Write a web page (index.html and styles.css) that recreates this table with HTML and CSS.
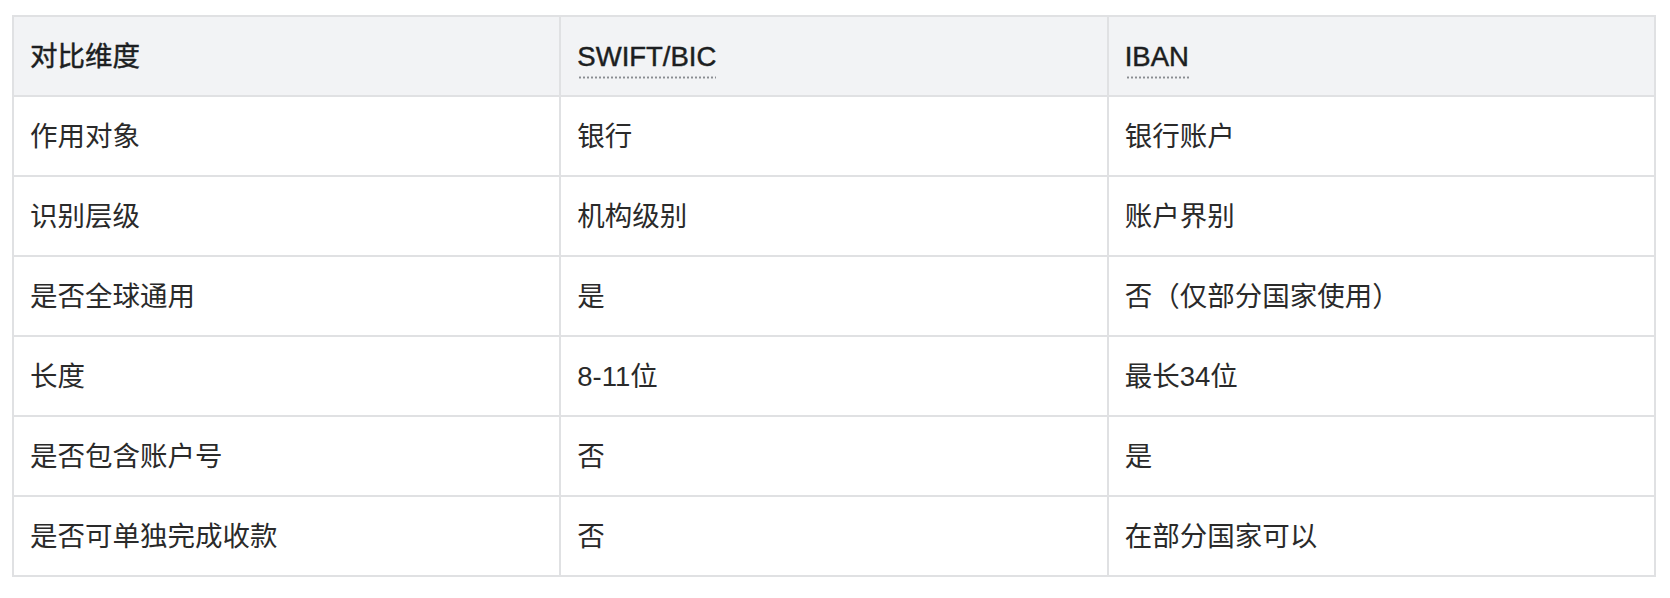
FILE: index.html
```html
<!DOCTYPE html>
<html lang="zh-CN">
<head>
<meta charset="utf-8">
<title>SWIFT/BIC 与 IBAN 对比</title>
<link rel="stylesheet" href="styles.css">
</head>
<body>
<div class="wrap">
  <table class="compare">
    <colgroup>
      <col class="c1"><col class="c2"><col class="c3">
    </colgroup>
    <thead>
      <tr>
        <th>对比维度</th>
        <th><abbr title="Society for Worldwide Interbank Financial Telecommunication / Bank Identifier Code">SWIFT/BIC</abbr></th>
        <th><abbr title="International Bank Account Number">IBAN</abbr></th>
      </tr>
    </thead>
    <tbody>
      <tr><td>作用对象</td><td>银行</td><td>银行账户</td></tr>
      <tr><td>识别层级</td><td>机构级别</td><td>账户界别</td></tr>
      <tr><td>是否全球通用</td><td>是</td><td>否（仅部分国家使用）</td></tr>
      <tr><td>长度</td><td>8-11位</td><td>最长34位</td></tr>
      <tr><td>是否包含账户号</td><td>否</td><td>是</td></tr>
      <tr><td>是否可单独完成收款</td><td>否</td><td>在部分国家可以</td></tr>
    </tbody>
  </table>
</div>
</body>
</html>
```

FILE: styles.css
```css
html, body {
  margin: 0;
  padding: 0;
  background: #ffffff;
}

body {
  font-family: "Liberation Sans", "Noto Sans CJK SC", sans-serif;
  color: #262626;
}

.wrap {
  padding: 15px 14px 0 12px;
}

.compare {
  width: 100%;
  border-collapse: collapse;
  table-layout: fixed;
  font-size: 27.5px;
}

.compare col {
  width: 33.333%;
}

.compare th,
.compare td {
  border: 2px solid #e0e1e3;
  padding: 2px 16px 0 16px;
  text-align: left;
  vertical-align: middle;
  line-height: 1.4;
  height: 80px;
  box-sizing: border-box;
}

.compare thead th {
  background: #f2f3f5;
  font-weight: 400;
  -webkit-text-stroke: 0.45px #1c1e21;
  color: #1c1e21;
  height: 80px;
}

.compare tbody td {
  font-weight: 400;
  color: #2a2a2a;
}

.compare abbr {
  text-decoration: none;
  padding-bottom: 7px;
  background-image: radial-gradient(circle, #8a8d91 0.9px, transparent 1.3px);
  background-repeat: repeat-x;
  background-position: 1px bottom;
  background-size: 4px 3px;
  cursor: help;
}
```
